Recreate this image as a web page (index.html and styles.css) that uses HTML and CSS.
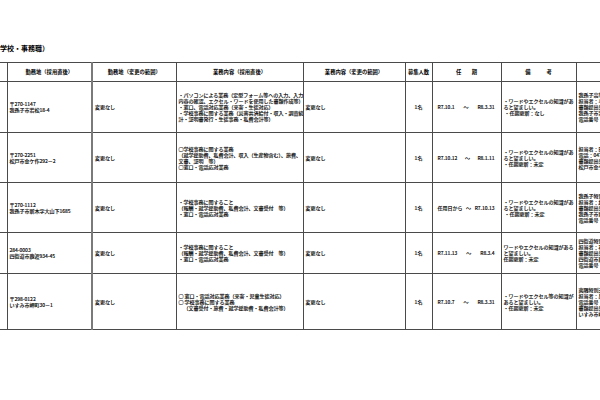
FILE: index.html
```html
<!DOCTYPE html>
<html lang="ja">
<head>
<meta charset="utf-8">
<title>学校・事務職</title>
<link rel="stylesheet" href="styles.css">
</head>
<body>
<div class="page">
  <h1 class="title">学校・事務職）</h1>
  <table class="grid">
    <colgroup>
      <col class="w0"><col class="w1"><col class="w2"><col class="w3"><col class="w4"><col class="w5"><col class="w6"><col class="w7"><col class="w8">
    </colgroup>
    <thead>
      <tr class="head">
        <th class="edge"></th>
        <th class="soft">勤務地（採用直後）</th>
        <th>勤務地（変更の範囲）</th>
        <th>業務内容（採用直後）</th>
        <th>業務内容（変更の範囲）</th>
        <th>募集人数</th>
        <th>任　　期</th>
        <th>備　　　考</th>
        <th></th>
      </tr>
    </thead>
    <tbody>
      <tr class="r1">
        <td class="edge"></td>
        <td class="soft">〒270-1147<br>我孫子市若松18-4</td>
        <td>変更なし</td>
        <td>・パソコンによる業務（定型フォーム等への入力、入力<br>内容の確認、エクセル・ワードを使用した書類作成等）<br>・窓口、電話対応業務（来客・生徒対応）<br>・学校事務に関する業務（災害共済給付・収入・調査統<br>計・証明書発行・生徒事務・私費会計等）</td>
        <td>変更なし</td>
        <td class="c">1名</td>
        <td><div class="term"><span>R7.10.1</span><span>〜</span><span>R8.3.31</span></div></td>
        <td>・ワードやエクセルの知識があ<br>ると望ましい。<br>&nbsp;・任期更新：なし</td>
        <td>我孫子高等学校<br>担当者：与田<br>書類提出先：事務室<br>我孫子市若松18-4<br>電話番号：04-7182-0111</td>
      </tr>
      <tr class="r2">
        <td class="edge"></td>
        <td class="soft">〒270-2251<br>松戸市金ケ作292－2</td>
        <td>変更なし</td>
        <td>○学校事務に関する業務<br>（就学援助費、私費会計、収入（生産物含む）、旅費、<br>文書、証明　等）<br>○窓口・電話応対業務</td>
        <td>変更なし</td>
        <td class="c">1名</td>
        <td><div class="term"><span>R7.10.12</span><span>〜</span><span>R8.1.11</span></div></td>
        <td>・ワードやエクセルの知識があ<br>ると望ましい。<br>・任期更新：未定</td>
        <td>担当者：田中<br>電話：047-387-0001<br>書類提出先：事務室<br>松戸市金ケ作292－2</td>
      </tr>
      <tr class="r3">
        <td class="edge"></td>
        <td class="soft">〒270-1112<br>我孫子市新木字大山下1685</td>
        <td>変更なし</td>
        <td>・学校事務に関すること<br>（報酬・就学援助費、私費会計、文書受付　等）<br>・窓口・電話応対業務</td>
        <td>変更なし</td>
        <td class="c">1名</td>
        <td><div class="term"><span>任用日から</span><span>〜</span><span>R7.10.13</span></div></td>
        <td>・ワードやエクセルの知識があ<br>ると望ましい。<br>&nbsp;・任期更新：未定</td>
        <td>我孫子特別支援学校<br>担当者：加藤<br>書類提出先：事務室<br>我孫子市新木1685<br>電話番号：04-7189-0001</td>
      </tr>
      <tr class="r4">
        <td class="edge"></td>
        <td class="soft">284-0003<br>四街道市鹿渡934-45</td>
        <td>変更なし</td>
        <td>・学校事務に関すること<br>（報酬・就学援助費、私費会計、文書受付　等）<br>・窓口・電話応対業務</td>
        <td>変更なし</td>
        <td class="c">1名</td>
        <td><div class="term"><span>R7.11.13</span><span>〜</span><span>R8.3.4</span></div></td>
        <td>ワードやエクセルの知識がある<br>と望ましい。<br>任期更新：未定</td>
        <td>四街道特別支援学校<br>担当者：石井<br>書類提出先：事務室<br>四街道市鹿渡934-45<br>電話番号：043-422-0001</td>
      </tr>
      <tr class="r5">
        <td class="edge"></td>
        <td class="soft">〒298-0122<br>いすみ市岬町30－1</td>
        <td>変更なし</td>
        <td>○ 窓口・電話対応業務（来客・児童生徒対応）<br>○ 学校事務に関する業務<br>&emsp;（文書受付・旅費・就学援助費・私費会計等）</td>
        <td>変更なし</td>
        <td class="c">1名</td>
        <td><div class="term"><span>R7.10.7</span><span>〜</span><span>R8.3.31</span></div></td>
        <td>・ワードやエクセル等の知識が<br>あると望ましい。<br>・任期更新：未定</td>
        <td>夷隅特別支援学校<br>担当者：黒田<br>電話番号：0470-87-0001<br>書類提出先：事務室<br>いすみ市岬町30－1</td>
      </tr>
    </tbody>
  </table>
</div>
</body>
</html>
```

FILE: styles.css
```css
html, body {
  margin: 0;
  padding: 0;
  background: #ffffff;
}

.page {
  width: 600px;
  height: 400px;
  overflow: hidden;
  font-family: "Noto Sans CJK JP", "Noto Sans", sans-serif;
  color: #000000;
}

.title {
  margin: 0 0 10px 0;
  padding-top: 44px;
  font-size: 7px;
  line-height: 8px;
  font-weight: bold;
  white-space: nowrap;
}

.grid {
  border-collapse: collapse;
  table-layout: fixed;
  width: 696px;
}

.w0 { width: 7px; }
.w1 { width: 85px; }
.w2 { width: 84px; }
.w3 { width: 127px; }
.w4 { width: 102px; }
.w5 { width: 27px; }
.w6 { width: 69px; }
.w7 { width: 75px; }
.w8 { width: 120px; }

.grid th,
.grid td {
  border: 1px solid #4a4a4a;
  padding: 0 2px;
  vertical-align: middle;
  white-space: nowrap;
  overflow: hidden;
  font-size: 5px;
  line-height: 6px;
  text-align: left;
}

.grid td {
  -webkit-text-stroke: 0.15px #000000;
}

.grid th {
  font-size: 5.3px;
  font-weight: bold;
  text-align: center;
}

.grid .soft {
  border-right: 2px solid #7a7a7a;
}

.grid .edge {
  border-left: none;
  padding: 0;
}

.grid td.c {
  text-align: center;
}

.head { height: 19px; }
.r1 { height: 51px; }
.r2 { height: 50px; }
.r3 { height: 50px; }
.r4 { height: 41px; }
.r5 { height: 56px; }

.term {
  display: flex;
  justify-content: space-between;
  padding: 0 4px 0 3px;
}
```
